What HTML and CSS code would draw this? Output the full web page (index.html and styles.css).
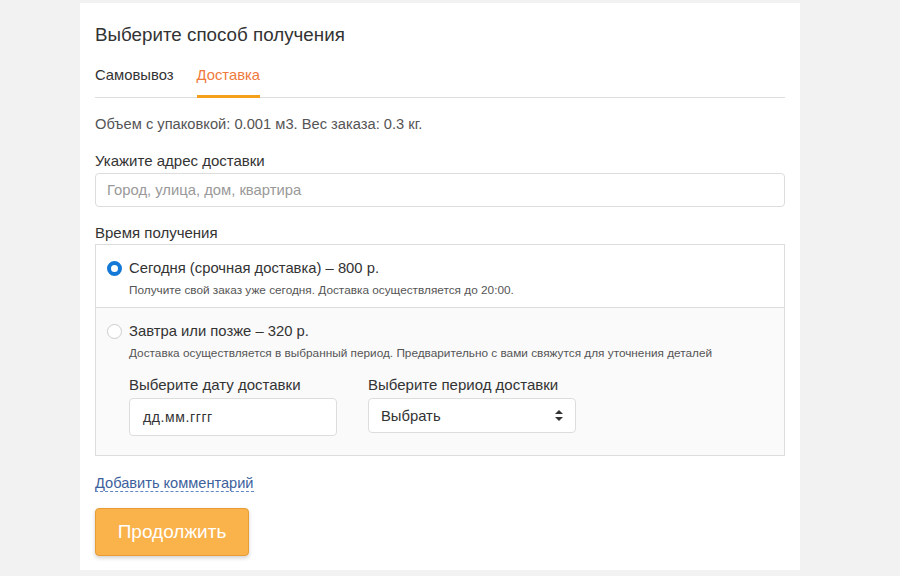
FILE: index.html
```html
<!DOCTYPE html>
<html lang="ru">
<head>
<meta charset="utf-8">
<title>Выберите способ получения</title>
<link rel="stylesheet" href="styles.css">
</head>
<body>
<div class="card">
  <h1 class="title">Выберите способ получения</h1>
  <div class="tabs">
    <span class="tab">Самовывоз</span>
    <span class="tab active">Доставка</span>
  </div>
  <p class="info">Объем с упаковкой: 0.001 м3. Вес заказа: 0.3 кг.</p>
  <div class="field">
    <label class="label">Укажите адрес доставки</label>
    <div class="input placeholder">Город, улица, дом, квартира</div>
  </div>
  <div class="label time-label">Время получения</div>
  <div class="options">
    <div class="option">
      <div class="opt-row">
        <span class="radio checked"></span>
        <span class="opt-title">Сегодня (срочная доставка) – 800 р.</span>
      </div>
      <div class="opt-desc">Получите свой заказ уже сегодня. Доставка осуществляется до 20:00.</div>
    </div>
    <div class="option alt">
      <div class="opt-row">
        <span class="radio"></span>
        <span class="opt-title">Завтра или позже – 320 р.</span>
      </div>
      <div class="opt-desc">Доставка осуществляется в выбранный период. Предварительно с вами свяжутся для уточнения деталей</div>
      <div class="pickers">
        <div class="picker">
          <div class="label">Выберите дату доставки</div>
          <div class="date">дд.мм.гггг</div>
        </div>
        <div class="picker">
          <div class="label">Выберите период доставки</div>
          <div class="select">
            <span>Выбрать</span>
            <svg class="arrows" width="8" height="11" viewBox="0 0 8 11"><path d="M4 0 L8 4 L0 4 Z M0 7 L8 7 L4 11 Z" fill="#333"/></svg>
          </div>
        </div>
      </div>
    </div>
  </div>
  <div class="comment"><span class="link">Добавить комментарий</span></div>
  <button class="btn">Продолжить</button>
</div>
</body>
</html>
```
FILE: styles.css
```css
html, body {
  margin: 0;
  padding: 0;
  background: #f2f2f2;
}
body {
  font-family: "Liberation Sans", Arial, sans-serif;
  color: #333;
  padding-top: 3px;
}
.card {
  width: 690px;
  margin-left: 80px;
  background: #fff;
  padding: 20px 15px 15px;
  height: 532px;
}
.title {
  margin: 0;
  font-size: 18.8px;
  font-weight: normal;
  line-height: 24px;
  color: #333;
}
.tabs {
  display: flex;
  gap: 23px;
  margin-top: 19px;
  border-bottom: 1px solid #ddd;
}
.tab {
  font-size: 14.8px;
  line-height: 18px;
  padding-bottom: 13px;
  color: #333;
}
.tab.active {
  color: #f07a3c;
  border-bottom: 3px solid #f5a01a;
  padding-bottom: 10px;
  margin-bottom: -1px;
  position: relative;
}
.info {
  margin: 17px 0 0;
  font-size: 14.7px;
  line-height: 18px;
  color: #555;
}
.field {
  margin-top: 19px;
}
.label {
  display: block;
  font-size: 15px;
  line-height: 18px;
  color: #333;
  margin-bottom: 3px;
}
.input {
  box-sizing: border-box;
  height: 34px;
  border: 1px solid #ddd;
  border-radius: 4px;
  padding: 0 11px;
  font-size: 14.8px;
  line-height: 32px;
}
.placeholder {
  color: #999;
}
.time-label {
  margin-top: 17px;
  margin-bottom: 2px;
}
.options {
  border: 1px solid #ddd;
}
.option {
  padding: 14px 11px 9px;
}
.option.alt {
  background: #fafafa;
  border-top: 1px solid #ddd;
  padding-bottom: 19px;
}
.opt-row {
  display: flex;
  align-items: center;
  gap: 7px;
}
.radio {
  box-sizing: border-box;
  width: 15px;
  height: 15px;
  border-radius: 50%;
  border: 1px solid #ccc;
  background: #fff;
}
.radio.checked {
  border: 4px solid #1479d6;
  background: #fff;
}
.opt-title {
  font-size: 14.8px;
  line-height: 18px;
}
.opt-desc {
  margin-top: 5px;
  margin-left: 22px;
  font-size: 11.8px;
  line-height: 16px;
  color: #555;
}
.pickers {
  display: flex;
  gap: 31px;
  margin-left: 22px;
  margin-top: 15px;
}
.picker {
  width: 208px;
}
.picker .label {
  margin-bottom: 4px;
}
.date {
  box-sizing: border-box;
  height: 38px;
  border: 1px solid #ddd;
  border-radius: 4px;
  background: #fff;
  padding: 0 13px;
  font-size: 14px;
  line-height: 36px;
  letter-spacing: 0.6px;
  color: #333;
}
.select {
  box-sizing: border-box;
  height: 35px;
  border: 1px solid #ddd;
  border-radius: 4px;
  background: #fff;
  padding: 0 12px;
  font-size: 14.8px;
  display: flex;
  align-items: center;
  justify-content: space-between;
  color: #333;
}
.comment {
  margin-top: 18px;
  font-size: 14.6px;
  line-height: 18px;
}
.link {
  color: #3d5f9c;
  border-bottom: 1px dashed #5f86c4;
}
.btn {
  display: block;
  margin-top: 16px;
  width: 154px;
  height: 48px;
  background: #fab24a;
  border: 1px solid #e89d34;
  border-radius: 4px;
  box-shadow: 0 2px 4px rgba(0,0,0,0.18);
  color: #fff;
  font-family: "Liberation Sans", Arial, sans-serif;
  font-size: 19px;
  padding: 0;
}
```
